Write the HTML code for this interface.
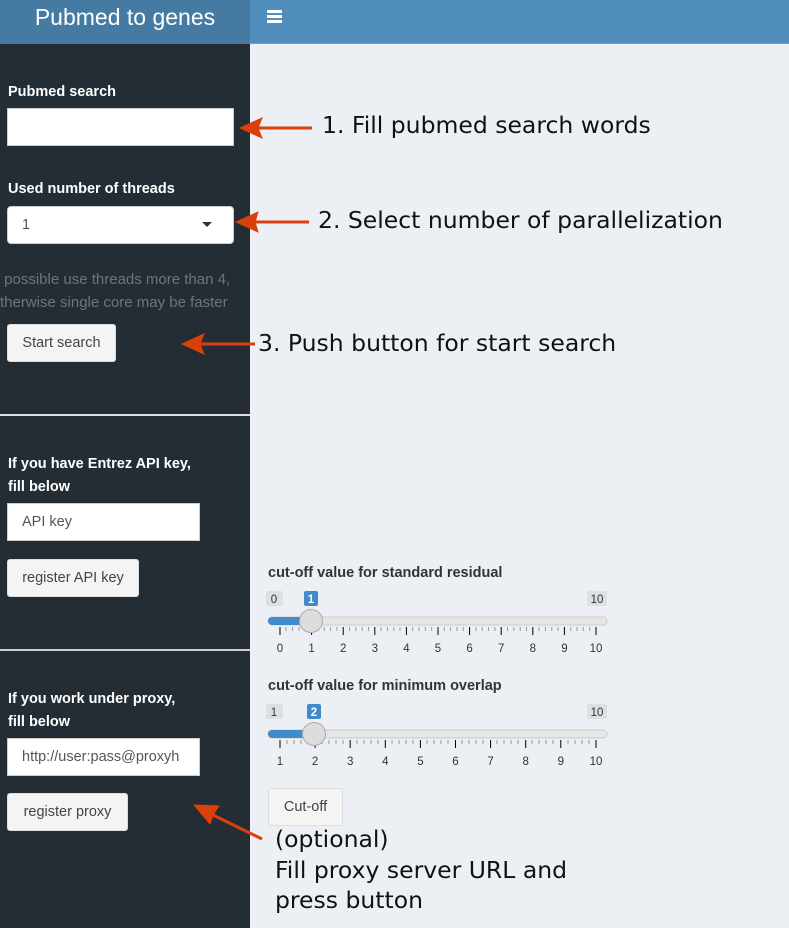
<!DOCTYPE html>
<html><head><meta charset="utf-8"><style>
*{box-sizing:border-box;margin:0;padding:0}
body{width:789px;height:928px;overflow:hidden;background:#ecf0f5;font-family:"Liberation Sans",sans-serif;position:relative}
.a{position:absolute}
.lab{color:#fff;font-weight:bold;font-size:14.5px;line-height:23px;white-space:nowrap}
.inp{background:#fff;border:1px solid #ccc;height:38px;font-size:14.5px;color:#555;padding:0 14px;line-height:36px}
.btn{background:#f4f4f4;border:1px solid #ddd;border-radius:3px;font-size:14.5px;color:#444;text-align:center;line-height:36px;height:38px}
.ann{font-family:"DejaVu Sans",Verdana,sans-serif;font-size:23.5px;color:#111;white-space:nowrap}
</style></head><body>
<div class="a" style="left:0;top:0;width:250px;height:44px;background:#457ba3;color:#fff;font-size:23px;text-align:center;line-height:34px">Pubmed to genes</div>
<div class="a" style="left:250px;top:0;width:539px;height:44px;background:#508fbd;border-bottom:1px solid #6aa3cf"></div>
<div class="a" style="left:267px;top:10px;width:15px;height:3px;background:#fff;box-shadow:0 5px 0 #fff,0 10px 0 #fff"></div>
<div class="a" style="left:0;top:44px;width:250px;height:884px;background:#242d33"></div>

<div class="a lab" style="left:8px;top:81px">Pubmed search</div>
<div class="a inp" style="left:7px;top:108px;width:227px"></div>
<div class="a lab" style="left:8px;top:178px">Used number of threads</div>
<div class="a inp" style="left:7px;top:206px;width:227px;border-radius:4px">1</div>
<div class="a" style="left:202px;top:222px;border:5px solid transparent;border-top:5px solid #333;border-bottom:0"></div>
<div class="a" style="left:0;top:268px;color:#6f757a;font-size:15px;line-height:23px;white-space:nowrap">&nbsp;possible use threads more than 4,<br>therwise single core may be faster</div>
<div class="a btn" style="left:7px;top:324px;width:109px">Start search</div>
<div class="a" style="left:0;top:414px;width:250px;height:2px;background:#ddd"></div>
<div class="a lab" style="left:8px;top:453px">If you have Entrez API key,<br>fill below</div>
<div class="a inp" style="left:7px;top:503px;width:193px">API key</div>
<div class="a btn" style="left:7px;top:559px;width:132px">register API key</div>
<div class="a" style="left:0;top:649px;width:250px;height:2px;background:#ccc"></div>
<div class="a lab" style="left:8px;top:688px">If you work under proxy,<br>fill below</div>
<div class="a inp" style="left:7px;top:738px;width:193px;overflow:hidden;white-space:nowrap">http://user:pass@proxyh</div>
<div class="a btn" style="left:7px;top:793px;width:121px">register proxy</div>

<div class="a" style="left:268px;top:565px;font-weight:bold;font-size:14.5px;color:#333">cut-off value for standard residual</div>
<div class="a" style="left:268px;top:678px;font-weight:bold;font-size:14.5px;color:#333">cut-off value for minimum overlap</div>
<div class="a btn" style="left:268px;top:788px;width:75px;line-height:36px">Cut-off</div>

<svg class="a" style="left:0;top:0" width="789" height="928" font-family="Liberation Sans,sans-serif">
<g font-size="11.5" text-anchor="middle">
<rect x="266" y="591" width="17" height="15" rx="2" fill="#dcdfe3"/><text x="274" y="603" fill="#333">0</text>
<rect x="304" y="591" width="14" height="15" rx="2" fill="#428bca"/><text x="311" y="603" fill="#fff" font-weight="bold">1</text>
<rect x="587" y="591" width="20" height="15" rx="2" fill="#dcdfe3"/><text x="597" y="603" fill="#333">10</text>
<rect x="268" y="617" width="339" height="8" rx="4" fill="#e6e6e6" stroke="#ccc"/>
<rect x="268" y="617" width="43" height="8" rx="4" fill="#428bca"/>
<g stroke="#000" stroke-width="1">
<path d="M280 627v8M311.6 627v8M343.2 627v8M374.8 627v8M406.4 627v8M438 627v8M469.6 627v8M501.2 627v8M532.8 627v8M564.4 627v8M596 627v8"/>
</g>
<g stroke="#999"><path d="M286 627v4M292.6 627v4M299 627v4M305.3 627v4M318 627v4M324.2 627v4M330.6 627v4M336.9 627v4M349.5 627v4M355.8 627v4M362.2 627v4M368.5 627v4M381 627v4M387.4 627v4M393.8 627v4M400 627v4M412.7 627v4M419 627v4M425.3 627v4M431.7 627v4M444.3 627v4M450.6 627v4M457 627v4M463.3 627v4M476 627v4M482.2 627v4M488.5 627v4M494.9 627v4M507.5 627v4M513.8 627v4M520.2 627v4M526.5 627v4M539 627v4M545.4 627v4M551.8 627v4M558 627v4M570.7 627v4M577 627v4M583.3 627v4M589.7 627v4"/></g>
<circle cx="311" cy="621" r="11.5" fill="#ddd" stroke="#aaa"/>
<g fill="#333"><text x="280" y="652">0</text><text x="311.6" y="652">1</text><text x="343.2" y="652">2</text><text x="374.8" y="652">3</text><text x="406.4" y="652">4</text><text x="438" y="652">5</text><text x="469.6" y="652">6</text><text x="501.2" y="652">7</text><text x="532.8" y="652">8</text><text x="564.4" y="652">9</text><text x="596" y="652">10</text></g>

<rect x="266" y="704" width="17" height="15" rx="2" fill="#dcdfe3"/><text x="274" y="716" fill="#333">1</text>
<rect x="307" y="704" width="14" height="15" rx="2" fill="#428bca"/><text x="314" y="716" fill="#fff" font-weight="bold">2</text>
<rect x="587" y="704" width="20" height="15" rx="2" fill="#dcdfe3"/><text x="597" y="716" fill="#333">10</text>
<rect x="268" y="730" width="339" height="8" rx="4" fill="#e6e6e6" stroke="#ccc"/>
<rect x="268" y="730" width="46" height="8" rx="4" fill="#428bca"/>
<g stroke="#000"><path d="M280 740v8M315.1 740v8M350.2 740v8M385.3 740v8M420.4 740v8M455.5 740v8M490.6 740v8M525.7 740v8M560.8 740v8M596 740v8"/></g>
<g stroke="#999"><path d="M287 740v4M294 740v4M301 740v4M308 740v4M322 740v4M329 740v4M336 740v4M343 740v4M357 740v4M364 740v4M371 740v4M378 740v4M392 740v4M399 740v4M406 740v4M413 740v4M427 740v4M434 740v4M441 740v4M448 740v4M462 740v4M469 740v4M476 740v4M483 740v4M497 740v4M504 740v4M511 740v4M518 740v4M532 740v4M539 740v4M546 740v4M553 740v4M568 740v4M575 740v4M582 740v4M589 740v4"/></g>
<circle cx="314" cy="734" r="11.5" fill="#ddd" stroke="#aaa"/>
<g fill="#333"><text x="280" y="765">1</text><text x="315.1" y="765">2</text><text x="350.2" y="765">3</text><text x="385.3" y="765">4</text><text x="420.4" y="765">5</text><text x="455.5" y="765">6</text><text x="490.6" y="765">7</text><text x="525.7" y="765">8</text><text x="560.8" y="765">9</text><text x="596" y="765">10</text></g>
</g>
<g fill="#d9400b" stroke="#d9400b">
<path d="M258 128H312" stroke-width="3"/><path d="M240 128L262 118L258 128L262 138Z"/>
<path d="M255 222H309" stroke-width="3"/><path d="M236 222L258 212L255 222L258 232Z"/>
<path d="M200 344H255" stroke-width="3"/><path d="M182 344L204 334L200 344L204 354Z"/>
<path d="M262 839L213 815" stroke-width="3"/><path d="M194 805L219 806L213 815L210 824Z"/>
</g>
</svg>
<div class="a ann" style="left:322px;top:111px">1. Fill pubmed search words</div>
<div class="a ann" style="left:318px;top:206px">2. Select number of parallelization</div>
<div class="a ann" style="left:258px;top:329px">3. Push button for start search</div>
<div class="a ann" style="left:275px;top:824px;line-height:30.5px">(optional)<br>Fill proxy server URL and<br>press button</div>
</body></html>
